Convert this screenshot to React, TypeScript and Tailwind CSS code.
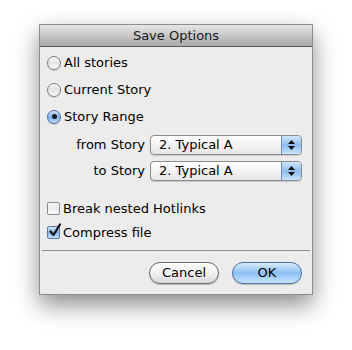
import React, { useState } from 'react';

const font = { fontFamily: '"DejaVu Sans", "Liberation Sans", sans-serif' };

function Radio({ on }: { on?: boolean }) {
  return (
    <span
      className={`relative flex h-[14px] w-[14px] shrink-0 items-center justify-center rounded-full border ${
        on
          ? 'border-[#4a6fa8] bg-gradient-to-b from-[#cfe3fa] via-[#7fb1ea] to-[#b9dafb]'
          : 'border-[#7c7c7c] bg-gradient-to-b from-[#f7f7f7] via-[#e3e3e3] to-[#fdfdfd]'
      } shadow-[0_1px_1px_rgba(0,0,0,0.15)]`}
    >
      {on && <span className="h-[5px] w-[5px] rounded-full bg-[#1a1a1a]" />}
    </span>
  );
}

function Check({ on }: { on?: boolean }) {
  return (
    <span
      className={`relative flex h-[13px] w-[13px] shrink-0 items-center justify-center rounded-[2px] border ${
        on
          ? 'border-[#5a7aa8] bg-gradient-to-b from-[#cfe3fa] via-[#86b6ec] to-[#c5e0fb]'
          : 'border-[#8a8a8a] bg-gradient-to-b from-[#f8f8f8] via-[#ececec] to-[#ffffff]'
      }`}
    >
      {on && (
        <svg width="14" height="15" viewBox="0 0 14 15" className="absolute -top-[4px] left-[0px]">
          <path d="M2.5 8.5 L5.5 12 L12 1.5" fill="none" stroke="#111" strokeWidth="2.2" strokeLinecap="round" strokeLinejoin="round" />
        </svg>
      )}
    </span>
  );
}

function Popup({ value }: { value: string }) {
  return (
    <div className="flex h-[20px] w-[152px] overflow-hidden rounded-[4px] border border-[#8c8c8c] bg-gradient-to-b from-[#ffffff] via-[#f3f3f3] to-[#e6e6e6] shadow-[0_1px_1px_rgba(0,0,0,0.15)]">
      <span className="flex-1 pl-[8px] text-[13px] leading-[18px] text-black">{value}</span>
      <span className="flex w-[20px] flex-col items-center justify-center gap-[2px] rounded-r-[3px] border-l border-[#6f8fc0] bg-gradient-to-b from-[#d3e7fb] via-[#8dbcef] to-[#c9e3fc]">
        <svg width="7" height="4" viewBox="0 0 7 4"><path d="M3.5 0 L7 4 H0 Z" fill="#111" /></svg>
        <svg width="7" height="4" viewBox="0 0 7 4"><path d="M0 0 H7 L3.5 4 Z" fill="#111" /></svg>
      </span>
    </div>
  );
}

export default function App() {
  const [range] = useState('story');

  return (
    <div className="h-[350px] w-[352px] bg-white pl-[39px] pt-[24px]" style={font}>
      <div className="flex h-[271px] w-[274px] flex-col border border-[#8d8d8d] bg-[#ececec] shadow-[0_10px_22px_rgba(0,0,0,0.45)]">
        <div className="flex h-[22px] shrink-0 items-center justify-center border-b border-[#5c5c5c] bg-gradient-to-b from-[#e6e6e6] to-[#a9a9a9] text-[13px] text-[#1a1a1a]">
          Save Options
        </div>

        <div className="flex flex-1 flex-col pl-[7px] pr-[10px] pt-[7px] text-[13px] text-black">
          <label className="flex h-[17px] items-center gap-[3px]">
            <Radio />
            <span>All stories</span>
          </label>
          <label className="mt-[10px] flex h-[17px] items-center gap-[3px]">
            <Radio />
            <span>Current Story</span>
          </label>
          <label className="mt-[10px] flex h-[17px] items-center gap-[3px]">
            <Radio on={range === 'story'} />
            <span>Story Range</span>
          </label>

          <div className="mt-[10px] grid grid-cols-[98px_auto] items-center gap-x-[5px] gap-y-[6px]">
            <span className="text-right">from Story</span>
            <Popup value="2. Typical A" />
            <span className="text-right">to Story</span>
            <Popup value="2. Typical A" />
          </div>

          <label className="mt-[19px] flex h-[17px] items-center gap-[3px]">
            <Check />
            <span>Break nested Hotlinks</span>
          </label>
          <label className="mt-[7px] flex h-[17px] items-center gap-[3px]">
            <Check on />
            <span>Compress file</span>
          </label>
        </div>

        <div className="mx-[2px] border-t border-[#8e8e8e]" />

        <div className="flex h-[43px] shrink-0 items-center justify-end gap-[13px] pr-[10px] pt-[1px] text-[13px]">
          <button className="h-[22px] w-[70px] rounded-full border border-[#6a6a6a] bg-gradient-to-b from-[#ffffff] via-[#f1f1f1] to-[#dadada] text-black shadow-[0_1px_1px_rgba(0,0,0,0.2)]">
            Cancel
          </button>
          <button className="h-[22px] w-[70px] rounded-full border border-[#4c6fa6] bg-gradient-to-b from-[#d9ecfd] via-[#8cc0f3] to-[#c7e5fd] text-black shadow-[0_1px_1px_rgba(0,0,0,0.2)]">
            OK
          </button>
        </div>
      </div>
    </div>
  );
}
